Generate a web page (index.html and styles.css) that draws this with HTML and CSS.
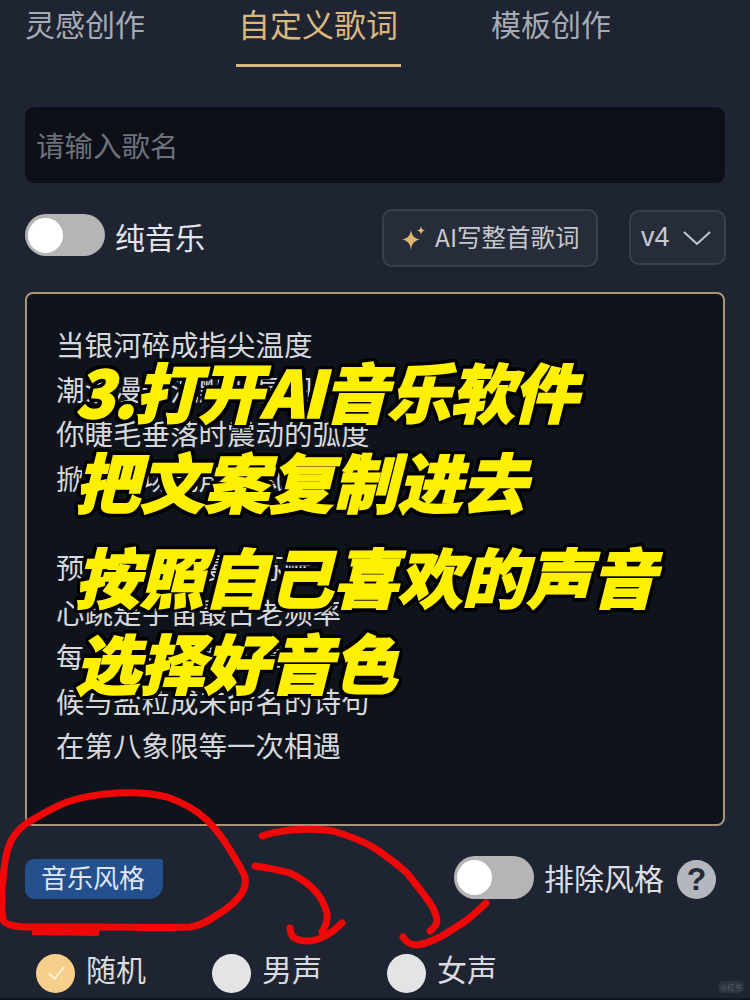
FILE: index.html
```html
<!DOCTYPE html>
<html lang="zh-CN">
<head>
<meta charset="utf-8">
<title>自定义歌词</title>
<link rel="stylesheet" href="styles.css">
</head>
<body>
<div class="page">
  <nav class="tabs">
    <div class="tab tab-first">灵感创作</div>
    <div class="tab tab-active">自定义歌词</div>
    <div class="tab tab-last">模板创作</div>
  </nav>
  <div class="song-input">请输入歌名</div>
  <div class="tools">
    <span class="switch switch-top"><span class="knob"></span></span>
    <span class="tools-label">纯音乐</span>
    <span class="ai-btn">
      <svg class="spark" viewBox="0 0 26 26"><path d="M10 5 C11 11 13 13 19 14.500 C13 16 11 18 10 25 C9 18 7 16 1 14.500 C7 13 9 11 10 5Z" fill="#e0b871"/><path d="M20 1 C20.500 4 21.500 5 24 5.500 C21.500 6 20.500 7 20 10 C19.500 7 18.500 6 16 5.500 C18.500 5 19.500 4 20 1Z" fill="#e0b871"/></svg>
      <span class="ai-text">AI写整首歌词</span>
    </span>
    <span class="version">v4
      <svg class="chev" viewBox="0 0 30 16"><path d="M2 2 L15 14 L28 2" fill="none" stroke="#c3c7cf" stroke-width="2"/></svg>
    </span>
  </div>
  <div class="lyrics">
    <p>当银河碎成指尖温度</p>
    <p>潮汐漫过沉默的星图</p>
    <p>你睫毛垂落时震动的弧度</p>
    <p>掀起一场无声的风暴</p>
    <p>&nbsp;</p>
    <p>预言在掌心慢慢苏醒</p>
    <p>心跳是宇宙最古老频率</p>
    <p>每一次呼吸都在靠近</p>
    <p>候与盐粒成未命名的诗句</p>
    <p>在第八象限等一次相遇</p>
  </div>
  <div class="style-row">
    <span class="style-tag">音乐风格</span>
    <div class="style-right">
      <span class="switch switch-small"><span class="knob"></span></span>
      <span class="style-label">排除风格</span>
      <span class="help">?</span>
    </div>
  </div>
  <div class="voices">
    <span class="voice voice-first">
      <span class="radio radio-on"><svg viewBox="0 0 24 24"><path d="M5 12.500 L10.500 18 L20 6" fill="none" stroke="#fff4dc" stroke-width="2"/></svg></span><span class="voice-text">随机</span>
    </span>
    <span class="voice"><span class="radio"></span><span class="voice-text">男声</span></span>
    <span class="voice"><span class="radio"></span><span class="voice-text">女声</span></span>
  </div>

  <div class="caption">
    <div class="cap cap1">3.打开AI音乐软件</div>
    <div class="cap cap2">把文案复制进去</div>
    <div class="cap cap3">按照自己喜欢的声音</div>
    <div class="cap cap4">选择好音色</div>
  </div>

  <svg class="scribble" viewBox="0 0 750 1000">
    <g fill="none" stroke="#f00808" stroke-linecap="round" stroke-linejoin="round">
      <path stroke-width="7" d="M33 927 C18 927 6 926 3 920 C1 905 1 890 3 880 C4 865 6 852 10 843 C14 834 20 828 27 823 C40 815 52 808 67 802 C84 796 100 794 117 793 C135 792 152 793 167 797 C182 802 196 810 207 820 C217 830 224 840 230 850 C236 860 242 869 245 877 C246 883 245 888 242 893 C236 902 227 909 217 915 C208 921 200 926 190 927 C160 928 130 927 100 927 C78 927 55 927 33 927Z"/>
      <path stroke-width="10" stroke-linecap="butt" d="M32 930 L99 931"/>
      <path stroke-width="7" d="M255 866 C268 868 280 870 290 873 C301 878 310 885 317 893 C322 899 325 906 327 913 C328 920 326 926 322 932"/>
      <path stroke-width="7" d="M342 923 C337 928 332 932 327 935 C320 939 314 941 307 941 C301 941 297 940 293 937 C291 934 290 931 290 928"/>
      <path stroke-width="7" d="M262 836 C271 833 280 831 290 830 C305 829 320 829 333 831 C347 835 360 840 373 847 C385 855 397 864 407 873 C415 883 423 893 430 903 C434 909 436 914 437 920 C437 925 434 928 430 931"/>
      <path stroke-width="7" d="M486 903 C480 909 473 915 467 920 C458 926 449 932 440 937 C432 941 425 944 417 945 C411 945 406 942 403 937"/>
    </g>
  </svg>

  <span class="mark">小红书</span>
</div>
</body>
</html>
```
FILE: styles.css
```css
* { box-sizing: border-box; }
html, body { margin: 0; padding: 0; }
body {
  width: 750px;
  height: 1000px;
  overflow: hidden;
  background: #1e2431;
  font-family: "Noto Sans CJK SC", "Noto Sans", sans-serif;
}
.page {
  position: relative;
  width: 750px;
  height: 1000px;
  padding: 0 25px 0 25px;
  background: #1e2431;
  border-bottom: 2px solid #12161f;
}

/* tabs */
.tabs {
  display: flex;
  align-items: flex-start;
  height: 67px;
  margin-bottom: 40px;
}
.tab {
  height: 67px;
  font-size: 30px;
  line-height: 46px;
  color: #a7abb3;
  white-space: nowrap;
}
.tab-first { width: 211px; padding-left: 0; }
.tab-active {
  width: 165px;
  padding-left: 2px;
  font-size: 32px;
  color: #d9b77e;
  border-bottom: 3px solid #d9b77e;
}
.tab-last { margin-left: 90px; }

/* song input */
.song-input {
  display: flex;
  align-items: center;
  height: 76px;
  margin-bottom: 25px;
  padding: 0 0 2px 11px;
  border-radius: 9px;
  background: #0d1018;
  color: #6e727a;
  font-size: 28.500px;
}

/* tool row */
.tools {
  display: flex;
  align-items: center;
  height: 59px;
  margin-bottom: 25px;
}
.switch {
  display: flex;
  align-items: center;
  flex: none;
  width: 80px;
  height: 42px;
  padding: 0 3px;
  border-radius: 21px;
  background: #b5b5b5;
}
.switch-top { margin-bottom: 5px; }
.knob {
  display: block;
  width: 35px;
  height: 35px;
  border-radius: 50%;
  background: #fff;
}
.tools-label {
  flex: none;
  width: 90px;
  margin: 0 0 4px 10px;
  font-size: 30px;
  color: #e3e5e9;
  white-space: nowrap;
}
.ai-btn {
  display: flex;
  flex: none;
  align-items: center;
  width: 216px;
  height: 58px;
  margin-left: 177px;
  padding-left: 17px;
  border: 2px solid #393f4c;
  border-radius: 10px;
  background: #262c39;
  color: #c6c9d0;
  font-size: 24.500px;
  white-space: nowrap;
}
.ai-text { padding-bottom: 2px; }
.spark { width: 26px; height: 26px; margin-right: 8px; flex: none; }
.version {
  display: flex;
  flex: none;
  align-items: center;
  justify-content: space-between;
  width: 97px;
  height: 55px;
  margin-left: 31px;
  padding: 0 12px 0 10px;
  border: 2px solid #393f4c;
  border-radius: 10px;
  background: #262c39;
  color: #c6c9d0;
  font-size: 27px;
  font-family: "Liberation Sans", sans-serif;
}
.chev { width: 30px; height: 16px; }

/* lyrics */
.lyrics {
  height: 534px;
  margin-bottom: 31px;
  padding: 28px 30px 0 29px;
  border: 2px solid #a8957a;
  border-radius: 8px;
  background: #0f131b;
  color: #d6d8dc;
  font-size: 28.500px;
}
.lyrics p {
  margin: 0;
  height: 44.600px;
  line-height: 44.600px;
  white-space: nowrap;
}

/* style row */
.style-row {
  display: flex;
  align-items: center;
  justify-content: space-between;
  height: 44px;
  margin-bottom: 52px;
}
.style-tag {
  width: 138px;
  height: 40px;
  padding-left: 16px;
  background: #24508e;
  border-radius: 9px 2px 14px 9px;
  color: #dfe6f1;
  font-size: 26px;
  line-height: 36px;
}
.style-right {
  display: flex;
  align-items: center;
  margin-right: 9px;
}
.switch-small { height: 43px; margin-bottom: 4px; }
.style-label {
  margin: 0 0 4px 10px;
  font-size: 30px;
  color: #dcdee2;
  white-space: nowrap;
}
.help {
  width: 39px;
  height: 39px;
  margin-left: 13px;
  border-radius: 50%;
  background: #b5b7bf;
  color: #262b38;
  font-family: "Liberation Sans", sans-serif;
  font-weight: 700;
  font-size: 32px;
  line-height: 39px;
  text-align: center;
}

/* voices */
.voices {
  display: flex;
  align-items: center;
  height: 40px;
  padding-left: 11px;
}
.voice {
  display: flex;
  align-items: center;
  font-size: 30px;
  line-height: 40px;
  color: #d9dbdf;
  margin-right: 65px;
}
.voice-first { margin-right: 66px; }
.voice-text { padding-bottom: 11px; }
.radio {
  display: flex;
  align-items: center;
  justify-content: center;
  width: 39px;
  height: 39px;
  margin-right: 11px;
  border-radius: 50%;
  background: #e3e4e5;
}
.radio-on { background: #f6cf8a; }
.radio-on svg { width: 24px; height: 24px; }

/* overlay caption */
.caption {
  position: absolute;
  left: 75px;
  top: 345px;
  width: 660px;
  color: #fff000;
  font-size: 64.500px;
  font-weight: 900;
  font-style: italic;
  white-space: nowrap;
  -webkit-text-stroke: 1.500px #fff000;
  text-shadow:
    4px 0 0 #000, -4px 0 0 #000, 0 4px 0 #000, 0 -4px 0 #000,
    3px 3px 0 #000, -3px 3px 0 #000, 3px -3px 0 #000, -3px -3px 0 #000,
    4px 2px 0 #000, -4px 2px 0 #000, 4px -2px 0 #000, -4px -2px 0 #000,
    2px 4px 0 #000, -2px 4px 0 #000, 2px -4px 0 #000, -2px -4px 0 #000;
}
.cap { height: 90px; line-height: 90px; }
.cap1 { letter-spacing: -1.300px; }
.cap2 { height: 95px; }
.cap3 { height: 86px; }

/* red pen */
.scribble {
  position: absolute;
  left: 0;
  top: 0;
  width: 750px;
  height: 1000px;
  pointer-events: none;
}

/* watermark */
.mark {
  position: absolute;
  right: 6px;
  bottom: 5px;
  width: 26px;
  height: 12px;
  border-radius: 6px;
  background: #2d333f;
  color: #59606c;
  font-size: 7px;
  line-height: 12px;
  text-align: center;
}
```
